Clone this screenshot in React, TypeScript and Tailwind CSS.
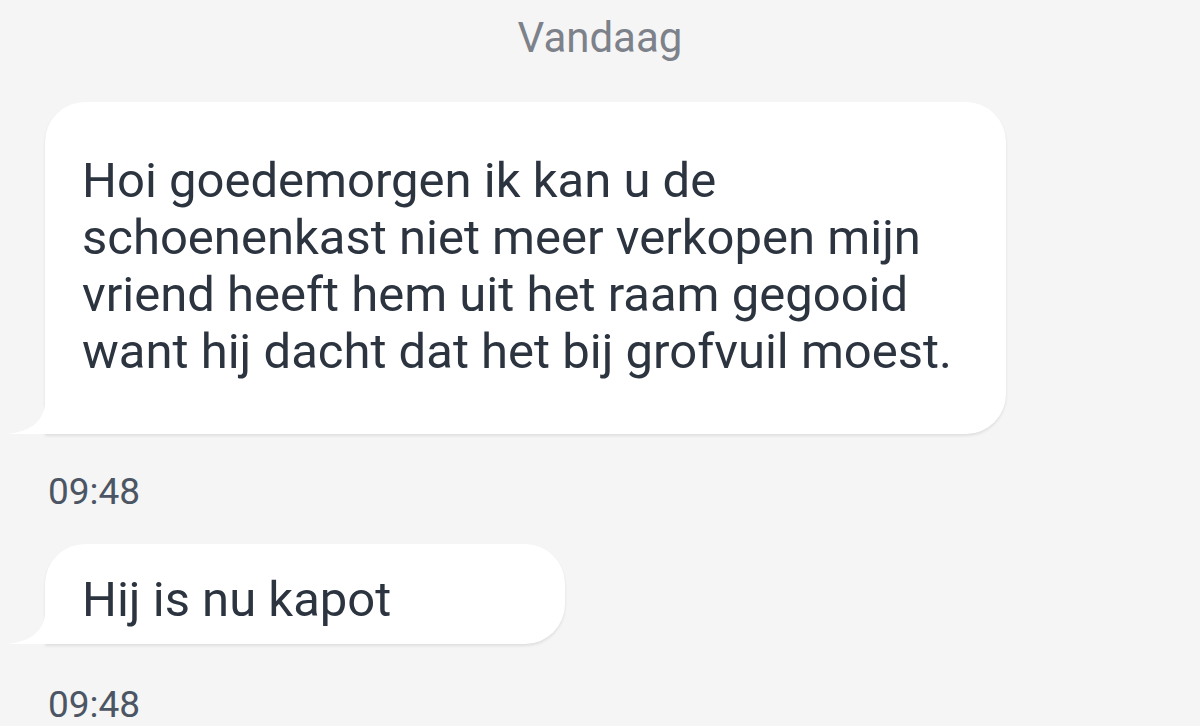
import React from 'react';

// Incoming message bubble with the little tail at the bottom-left
function Bubble({
  lines,
  className,
}: {
  lines: string[];
  className: string;
}) {
  return (
    <div
      className={`relative bg-white rounded-[40px] rounded-bl-none shadow-[0_2px_3px_rgba(0,0,0,0.09)] text-[49px] leading-[57px] text-[#2c3440] ${className}`}
    >
      <svg
        className="absolute left-[-37px] bottom-0"
        width="38"
        height="40"
        viewBox="0 0 38 40"
      >
        <path d="M38 0 C38 22 30 36 0 40 L38 40 Z" fill="#ffffff" />
      </svg>
      {lines.map((l, i) => (
        <div key={i} className="whitespace-nowrap">
          {l}
        </div>
      ))}
    </div>
  );
}

function Time({ className }: { className: string }) {
  return (
    <div className={`pl-[48px] text-[37px] leading-[44px] text-[#4b5563] ${className}`}>
      09:48
    </div>
  );
}

export default function App() {
  return (
    <div className="w-[1200px] h-[726px] overflow-hidden bg-[#f5f5f5] font-['Roboto',sans-serif]">
      <div className="pt-[8px] text-center text-[42px] leading-[60px] text-[#7d818a]">
        Vandaag
      </div>

      <div className="pl-[45px] pt-[34px]">
        <Bubble
          className="w-[961px] pl-[37px] pt-[50px] pb-[54px]"
          lines={[
            'Hoi goedemorgen ik kan u de',
            'schoenenkast niet meer verkopen mijn',
            'vriend heeft hem uit het raam gegooid',
            'want hij dacht dat het bij grofvuil moest.',
          ]}
        />
      </div>

      <Time className="pt-[36px]" />

      <div className="pl-[45px] pt-[30px]">
        <Bubble
          className="w-[520px] h-[100px] pl-[37px] pt-[27px]"
          lines={['Hij is nu kapot']}
        />
      </div>

      <Time className="pt-[39px]" />
    </div>
  );
}
